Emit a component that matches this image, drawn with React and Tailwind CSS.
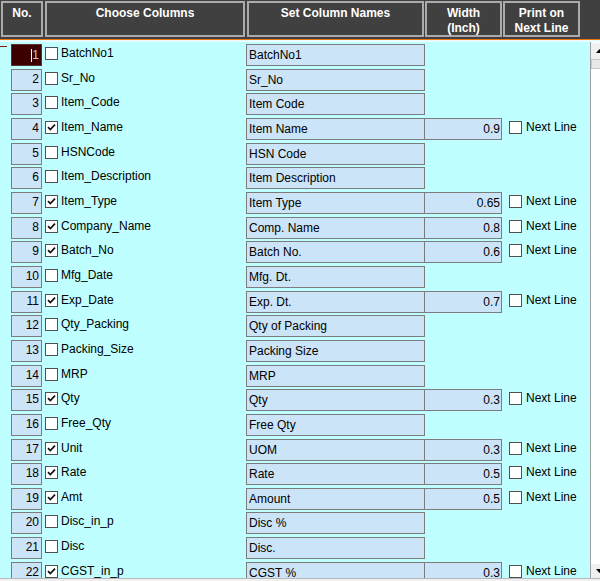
import React from "react";

const rows = [
  ["BatchNo1", false, "BatchNo1", null],
  ["Sr_No", false, "Sr_No", null],
  ["Item_Code", false, "Item Code", null],
  ["Item_Name", true, "Item Name", "0.9"],
  ["HSNCode", false, "HSN Code", null],
  ["Item_Description", false, "Item Description", null],
  ["Item_Type", true, "Item Type", "0.65"],
  ["Company_Name", true, "Comp. Name", "0.8"],
  ["Batch_No", true, "Batch No.", "0.6"],
  ["Mfg_Date", false, "Mfg. Dt.", null],
  ["Exp_Date", true, "Exp. Dt.", "0.7"],
  ["Qty_Packing", false, "Qty of Packing", null],
  ["Packing_Size", false, "Packing Size", null],
  ["MRP", false, "MRP", null],
  ["Qty", true, "Qty", "0.3"],
  ["Free_Qty", false, "Free Qty", null],
  ["Unit", true, "UOM", "0.3"],
  ["Rate", true, "Rate", "0.5"],
  ["Amt", true, "Amount", "0.5"],
  ["Disc_in_p", false, "Disc %", null],
  ["Disc", false, "Disc.", null],
  ["CGST_in_p", true, "CGST %", "0.3"],
];

function Check({ checked }) {
  return (
    <div className="w-[13px] h-[13px] shrink-0 border border-[#505050] bg-white flex items-center justify-center">
      {checked && (
        <svg width="11" height="11" viewBox="0 0 11 11">
          <path d="M2 5.2 L4.3 7.6 L9 2.6" fill="none" stroke="#111" strokeWidth="1.7" />
        </svg>
      )}
    </div>
  );
}

function HeaderCell({ w, ml, children }) {
  return (
    <div
      className={`${w} ${ml} h-[36px] shrink-0 border-2 border-[#ababab] text-white font-bold text-[12px] leading-[15px] text-center pt-[3px]`}
    >
      {children}
    </div>
  );
}

export default function App() {
  return (
    <div className="w-[600px] h-[581px] overflow-hidden bg-[#404040] flex flex-col font-['Liberation_Sans',Arial,sans-serif] text-[12px] text-black">
      {/* header */}
      <div className="h-[39px] shrink-0 flex pt-px pl-px">
        <HeaderCell w="w-[42px]" ml="">No.</HeaderCell>
        <HeaderCell w="w-[200px]" ml="ml-[2px]">Choose Columns</HeaderCell>
        <HeaderCell w="w-[177px]" ml="ml-[2px]">Set Column Names</HeaderCell>
        <HeaderCell w="w-[77px]" ml="ml-px">
          Width
          <br />
          (Inch)
        </HeaderCell>
        <HeaderCell w="w-[77px]" ml="ml-px">
          Print on
          <br />
          Next Line
        </HeaderCell>
      </div>
      <div className="h-px shrink-0 bg-[#e8760f]" />
      <div className="h-[2px] shrink-0 bg-[#e9fbfb]" />

      {/* body */}
      <div className="flex-1 min-h-0 flex">
        <div className="w-[590px] shrink-0 bg-[#bfffff] relative pt-[2px] overflow-hidden">
          <div className="absolute left-0 top-[4px] w-[7px] h-px bg-[#7a2200]" />
          {rows.map(([col, checked, name, width], i) => (
            <div key={i} className="h-[24.67px] flex items-start">
              {i === 0 ? (
                <div className="ml-[11px] w-[31px] h-[22px] shrink-0 border border-[#5a3030] bg-[#3c0000] flex items-center justify-end pr-[2px] leading-[20px]">
                  <span className="border-l border-white text-[#c8c8c8] pl-0 leading-[13px]">1</span>
                </div>
              ) : (
                <div className="ml-[11px] w-[31px] h-[22px] shrink-0 border border-[#7c7c7c] bg-[#cce4f7] text-right pr-[2px] leading-[19px]">
                  {i + 1}
                </div>
              )}
              <div className="ml-[3px] mt-[3px]">
                <Check checked={checked} />
              </div>
              <div className="ml-[3px] w-[185px] shrink-0 leading-[19px] whitespace-nowrap">{col}</div>
              <div className="w-[179px] h-[22px] shrink-0 border border-[#7c7c7c] bg-[#cce4f7] pl-[2px] leading-[20px] whitespace-nowrap">
                {name}
              </div>
              {width && (
                <>
                  <div className="w-[77px] h-[22px] shrink-0 border border-[#7c7c7c] border-l-0 bg-[#cce4f7] text-right pr-[1px] leading-[20px]">
                    {width}
                  </div>
                  <div className="ml-[7px] mt-[3px]">
                    <Check checked={false} />
                  </div>
                  <div className="ml-[4px] leading-[19px] whitespace-nowrap">Next Line</div>
                </>
              )}
            </div>
          ))}
        </div>
        {/* vertical scrollbar */}
        <div className="w-[17px] shrink-0 border-l border-[#a0a0a0] bg-white flex flex-col">
          <div className="h-[16px] mt-px bg-[#f0f0f0] flex items-center justify-center">
            <svg width="7" height="4" viewBox="0 0 7 4">
              <polygon points="0,4 3.5,0 7,4" fill="#000" />
            </svg>
          </div>
          <div className="h-[10px] bg-[#e8e8e8] border border-[#c8c8c8]" />
          <div className="flex-1" />
          <div className="h-[14px] bg-[#f0f0f0] flex items-center justify-center">
            <svg width="7" height="4" viewBox="0 0 7 4">
              <polygon points="0,0 3.5,4 7,0" fill="#000" />
            </svg>
          </div>
        </div>
      </div>
      <div className="h-[3px] shrink-0 border-t border-[#b8b8b8] bg-[#f0f0f0]" />
    </div>
  );
}
